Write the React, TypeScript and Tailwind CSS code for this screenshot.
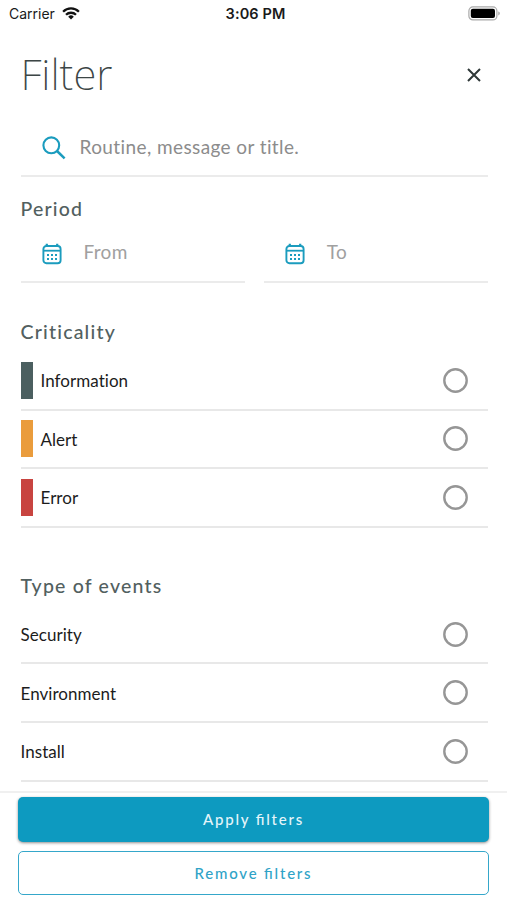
import React from "react";

function WifiIcon() {
  return (
    <svg viewBox="0 0 18 13" className="h-[13px] w-[18px]" fill="none" stroke="#111" strokeWidth="2.3">
      <path d="M1.1 4.7a11.2 11.2 0 0 1 15.8 0" />
      <path d="M4 7.8a7.1 7.1 0 0 1 10 0" />
      <path d="M9 12.6 6.2 9.7a4 4 0 0 1 5.6 0z" fill="#111" stroke="none" />
    </svg>
  );
}

function BatteryIcon() {
  return (
    <svg viewBox="0 0 32 15" className="h-[15px] w-[32px]">
      <rect x="0.9" y="0.9" width="28" height="13" rx="4" fill="none" stroke="#a9a9a9" strokeWidth="1.2" />
      <rect x="2.8" y="2.8" width="24.2" height="9.2" rx="2" fill="#000" />
      <path d="M30.4 5.6v3.8c.9-.4 1.3-1.1 1.3-1.9s-.4-1.5-1.3-1.9z" fill="#999" />
    </svg>
  );
}

function CloseIcon() {
  return (
    <svg viewBox="0 0 14 14" className="h-[14px] w-[14px]" fill="none" stroke="#2f3838" strokeWidth="2">
      <path d="M1 1l12 12M13 1 1 13" />
    </svg>
  );
}

function SearchIcon() {
  return (
    <svg viewBox="0 0 24 24" className="h-[24px] w-[24px]" fill="none" stroke="#1b9cbe" strokeWidth="2.1">
      <circle cx="9.3" cy="9.3" r="7.9" />
      <path d="M15 15l7.6 7.4" strokeWidth="2.5" />
    </svg>
  );
}

function CalendarIcon() {
  return (
    <svg viewBox="0 0 20 22" className="h-[22px] w-[20px]" fill="none" stroke="#1b9cbe" strokeWidth="1.9">
      <rect x="1.4" y="3" width="17.2" height="17.3" rx="3" />
      <path d="M1.4 7.7h17.2" strokeWidth="1.8" />
      <path d="M4.8 0.7v2.7M15.2 0.7v2.7" strokeWidth="2.2" />
      <path d="M5 12h2M9 12h2M13 12h2M5 16h2M9 16h2M13 16h2" strokeWidth="2" />
    </svg>
  );
}

function SectionTitle({ children }: { children: React.ReactNode }) {
  return <h2 className="text-[19.5px] leading-6 font-medium tracking-[1.2px] text-[#526060]">{children}</h2>;
}

function DateField({ label }: { label: string }) {
  return (
    <div className="flex h-[51px] flex-1 items-start border-b-2 border-[#ebebeb] pl-[21px]">
      <div className="pt-[11px]">
        <CalendarIcon />
      </div>
      <span className="ml-[22px] pt-2 text-[19px] leading-6 tracking-[0.3px] text-[#a0a0a0]">{label}</span>
    </div>
  );
}

function OptionRow({ label, color }: { label: string; color?: string }) {
  return (
    <div className="flex h-[58.6px] items-center border-b-2 border-[#e8e8e8] pr-5">
      {color && <span className={`mr-[8px] h-[37px] w-[12px] ${color}`} />}
      <span className="flex-1 pt-[2px] text-[17px] leading-6 tracking-[0.05px] text-[#1c1c1c]">{label}</span>
      <svg viewBox="0 0 25 25" className="size-[25px]" fill="none" stroke="#969696" strokeWidth="2.4">
        <circle cx="12.5" cy="12.5" r="11.2" />
      </svg>
    </div>
  );
}

export default function App() {
  return (
    <div className="flex h-[900px] w-[507px] flex-col overflow-hidden bg-white font-['Lato','Noto_Sans',sans-serif] [font-variant-ligatures:none]">
      <header className="grid h-[27px] shrink-0 grid-cols-3 items-center pr-[7px] pl-[9px] font-['Inter',sans-serif] text-[14px] text-[#1a1a1a]">
        <div className="flex items-center gap-[7px]">
          <span>Carrier</span>
          <WifiIcon />
        </div>
        <span className="pl-[2px] text-center text-[14.5px] font-semibold tracking-[0.1px]">3:06 PM</span>
        <div className="flex justify-end">
          <BatteryIcon />
        </div>
      </header>

      <main className="min-h-0 flex-1 overflow-hidden pr-[19px] pl-[20.5px]">
        <div className="flex h-[94px] items-center justify-between pt-[2px] pr-[7px]">
          <h1 className="pb-[3px] font-['Noto_Sans',sans-serif] text-[42px] leading-none font-[250] text-[#3c4646]">Filter</h1>
          <CloseIcon />
        </div>

        <div className="flex h-[56px] items-center border-b-2 border-[#ebebeb] pl-[21px]">
          <SearchIcon />
          <span className="ml-[14px] pb-[2px] text-[19px] leading-6 tracking-[0.4px] text-[#8c8c8c]">Routine, message or title.</span>
        </div>

        <div className="pt-[20px]">
          <SectionTitle>Period</SectionTitle>
          <div className="mt-[11px] flex gap-[19px]">
            <DateField label="From" />
            <DateField label="To" />
          </div>
        </div>

        <div className="pt-[37px]">
          <SectionTitle>Criticality</SectionTitle>
          <div className="mt-[8px]">
            <OptionRow label="Information" color="bg-[#4b5f60]" />
            <OptionRow label="Alert" color="bg-[#ea9c3c]" />
            <OptionRow label="Error" color="bg-[#c84440]" />
          </div>
        </div>

        <div className="pt-[46px]">
          <SectionTitle>Type of events</SectionTitle>
          <div className="mt-[8px]">
            <OptionRow label="Security" />
            <OptionRow label="Environment" />
            <OptionRow label="Install" />
          </div>
        </div>
      </main>

      <footer className="flex h-[109px] shrink-0 flex-col gap-[9px] border-t-2 border-[#f0f0f0] px-[18px] pt-[4px] text-[15px] font-medium tracking-[1.8px] [font-feature-settings:'liga']">
        <button className="h-[45px] rounded-[5px] bg-[#0d9ac0] text-[#e4f5fa] shadow-[0_1px_3px_rgba(0,0,0,0.45)]">Apply filters</button>
        <button className="h-[44px] rounded-[5px] border-[1.5px] border-[#35a7ca] text-[#2fa3c7]">Remove filters</button>
      </footer>
    </div>
  );
}
